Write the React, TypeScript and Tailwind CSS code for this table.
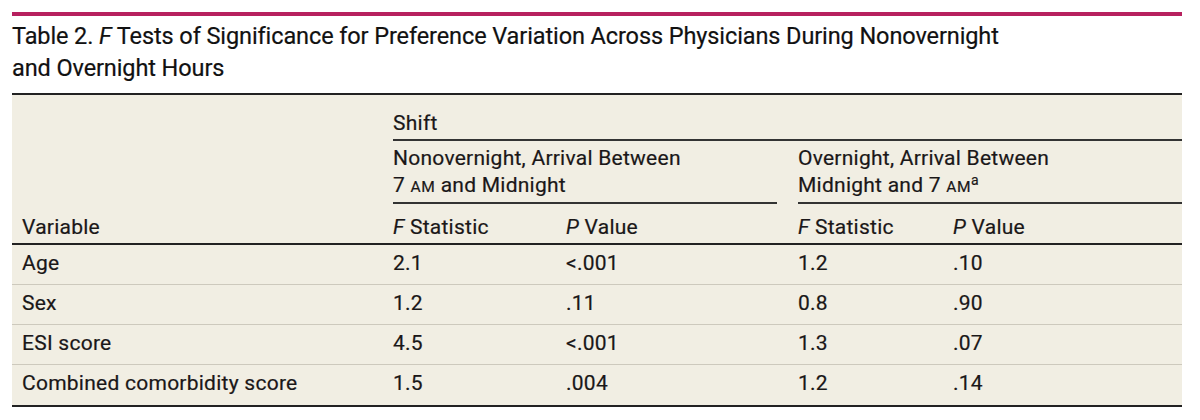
import React from "react";

const cols = "grid grid-cols-[381px_173px_232px_155px_229px]";

const rows = [
  ["Age", "2.1", "<.001", "1.2", ".10"],
  ["Sex", "1.2", ".11", "0.8", ".90"],
  ["ESI score", "4.5", "<.001", "1.3", ".07"],
  ["Combined comorbidity score", "1.5", ".004", "1.2", ".14"],
];

function Am() {
  return <span className="text-[15.5px] tracking-[0.5px]">AM</span>;
}

export default function App() {
  return (
    <div className="w-[1200px] h-[420px] bg-white pl-[12px] pt-[12px] font-['Roboto',sans-serif] text-[#1a1718] [-webkit-text-stroke:0.2px_currentColor]">
      <div className="w-[1170px]">
        <div className="h-[4px] bg-[#b7215f]" />
        <div className="mt-[4px] text-[23.5px] leading-[32px] tracking-[-0.1px] text-[#111]">
          Table 2. <i>F</i> Tests of Significance for Preference Variation Across Physicians During Nonovernight
          <br />
          and Overnight Hours
        </div>
        <div className="mt-[9px] border-t-2 border-[#222] bg-[#f1eee3] text-[21px] leading-[24px] tracking-[0.25px]">
          <div className={cols}>
            <div className="h-[44px]" />
            <div className="col-span-4 h-[46px] border-b-2 border-[#333] flex items-end pb-[4px]">Shift</div>
          </div>
          <div className={cols}>
            <div />
            <div className="col-span-2 pr-[21px]">
              <div className="border-b-2 border-[#333] pt-[4px] pb-[1px] leading-[27px]">
                Nonovernight, Arrival Between
                <br />7 <Am /> and Midnight
              </div>
            </div>
            <div className="col-span-2">
              <div className="border-b-2 border-[#333] pt-[4px] pb-[1px] leading-[27px]">
                Overnight, Arrival Between
                <br />Midnight and 7 <Am />
                <sup className="text-[14px]">a</sup>
              </div>
            </div>
          </div>
          <div className={`${cols} h-[41px] border-b-2 border-[#222] items-end pb-[4px]`}>
            <div className="pl-[10px]">Variable</div>
            <div><i>F</i> Statistic</div>
            <div><i>P</i> Value</div>
            <div><i>F</i> Statistic</div>
            <div><i>P</i> Value</div>
          </div>
          {rows.map((r, i) => (
            <div
              key={r[0]}
              className={`${cols} h-[40px] pt-[6px] ${i < rows.length - 1 ? "border-b border-[#cdc9bd]" : ""}`}
            >
              <div className="pl-[10px]">{r[0]}</div>
              <div>{r[1]}</div>
              <div>{r[2]}</div>
              <div>{r[3]}</div>
              <div>{r[4]}</div>
            </div>
          ))}
          <div className="border-b-2 border-[#222]" />
        </div>
      </div>
    </div>
  );
}
